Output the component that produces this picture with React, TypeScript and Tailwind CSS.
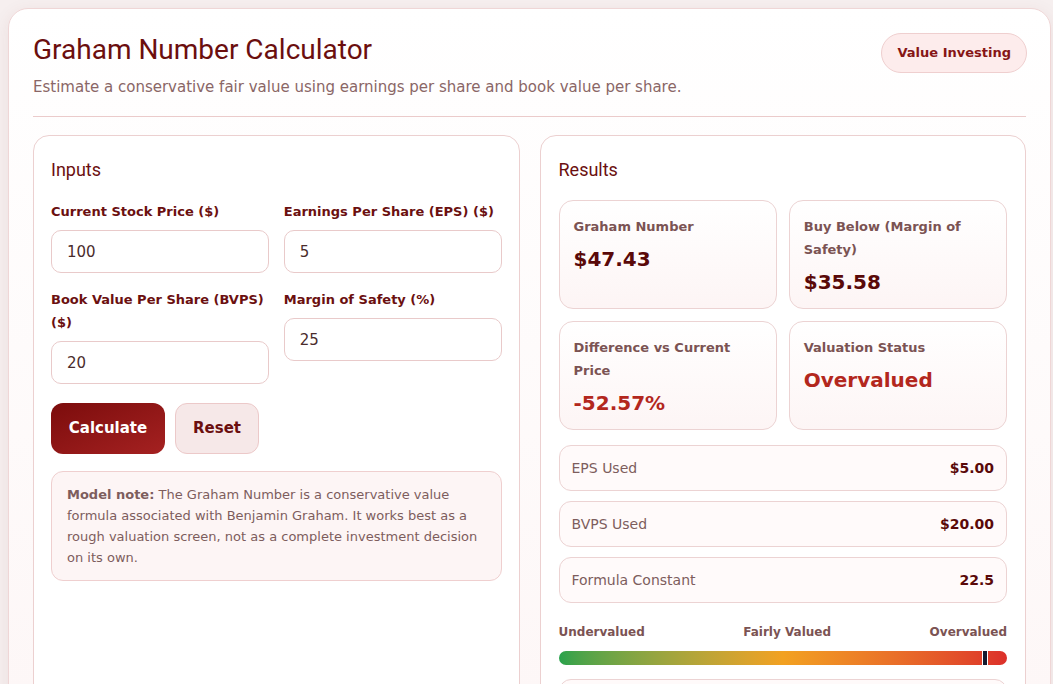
import { useState } from 'react';

const fieldDefs = [
  { key: 'price', label: 'Current Stock Price ($)', initial: '100' },
  { key: 'eps', label: 'Earnings Per Share (EPS) ($)', initial: '5' },
  { key: 'bvps', label: 'Book Value Per Share (BVPS) ($)', initial: '20' },
  { key: 'margin', label: 'Margin of Safety (%)', initial: '25' },
] as const;

type FieldKey = (typeof fieldDefs)[number]['key'];

function StatCard({ label, value, tone }: { label: string; value: string; tone: 'dark' | 'red' }) {
  return (
    <div className="rounded-[14px] border border-[#ecd3d3] bg-gradient-to-b from-white to-[#fdf5f5] px-[14px] pt-[14px] pb-[14px]">
      <div className="text-[13px] font-bold leading-[23px] text-[#7b5353]">{label}</div>
      <div
        className={
          tone === 'red'
            ? 'mt-[9px] text-[20px] font-bold leading-[24px] text-[#b3271d]'
            : 'mt-[9px] text-[20px] font-bold leading-[24px] text-[#5a0909]'
        }
      >
        {value}
      </div>
    </div>
  );
}

function DetailRow({ label, value }: { label: string; value: string }) {
  return (
    <div className="flex items-center justify-between rounded-[12px] border border-[#ecd3d3] bg-[#fffafa] px-3 h-[46px]">
      <span className="text-[14px] text-[#7d5d5d]">{label}</span>
      <span className="text-[14px] font-bold text-[#5a0909]">{value}</span>
    </div>
  );
}

export default function App() {
  const [values, setValues] = useState<Record<FieldKey, string>>({
    price: '100',
    eps: '5',
    bvps: '20',
    margin: '25',
  });

  const price = parseFloat(values.price) || 0;
  const eps = parseFloat(values.eps) || 0;
  const bvps = parseFloat(values.bvps) || 0;
  const margin = parseFloat(values.margin) || 0;

  const graham = Math.sqrt(22.5 * eps * bvps);
  const buyBelow = graham * (1 - margin / 100);
  const diff = price ? ((graham - price) / price) * 100 : 0;
  const status = price > graham * 1.1 ? 'Overvalued' : price < graham * 0.9 ? 'Undervalued' : 'Fairly Valued';

  // marker on the valuation bar, clamped so it stays inside the pill
  const markerPct = Math.min(95, Math.max(5, 50 - diff));

  return (
    <div className="min-h-screen bg-[#f6efef] pl-2 pr-[2px] pt-2 font-['DejaVu_Sans',sans-serif]">
      <div className="rounded-[20px] border border-[#efd6d6] bg-gradient-to-b from-white to-[#fdf6f6] p-6 shadow-[0_4px_18px_rgba(120,40,40,0.08)]">
        {/* HEADER */}
        <div className="flex items-start justify-between border-b border-[#ebcbcb] pb-[18px]">
          <div>
            <h1 className="font-['Roboto',sans-serif] text-[28px] leading-[34px] text-[#6b0e0e]">
              Graham Number Calculator
            </h1>
            <p className="mt-[10px] text-[15px] leading-[21px] text-[#8a6666]">
              Estimate a conservative fair value using earnings per share and book value per share.
            </p>
          </div>
          <span className="mr-[-1px] flex h-[40px] items-center rounded-full border border-[#efcfcf] bg-[#fdecec] px-[15px] text-[13px] font-bold text-[#861515]">
            Value Investing
          </span>
        </div>

        <div className="mt-[18px] grid grid-cols-2 gap-5">
          {/* INPUTS */}
          <section className="min-h-[560px] rounded-[16px] border border-[#ecd0d0] bg-white px-[17px] pt-[22px] pb-6">
            <h2 className="font-['Roboto',sans-serif] text-[18px] leading-[24px] text-[#6b1010]">Inputs</h2>

            <div className="mt-[18px] grid grid-cols-2 gap-x-[15px] gap-y-[15px]">
              {fieldDefs.map((f) => (
                <label key={f.key} className="block">
                  <span className="block text-[13px] font-bold leading-[23px] text-[#6b1010]">{f.label}</span>
                  <input
                    type="number"
                    value={values[f.key]}
                    onChange={(e) => setValues({ ...values, [f.key]: e.target.value })}
                    className="mt-[7px] h-[43px] w-full rounded-[10px] border border-[#e9caca] bg-white px-[15px] text-[15px] text-[#4a2c2c] outline-none [appearance:textfield] [&::-webkit-inner-spin-button]:appearance-none"
                  />
                </label>
              ))}
            </div>

            <div className="mt-[19px] flex gap-[10px]">
              <button className="h-[51px] w-[114px] rounded-[12px] bg-gradient-to-br from-[#7c0c0c] to-[#a52121] text-[15px] font-bold text-white">
                Calculate
              </button>
              <button
                onClick={() => setValues({ price: '', eps: '', bvps: '', margin: '' })}
                className="h-[51px] w-[84px] rounded-[12px] border border-[#ecc9c9] bg-[#f6e8e8] text-[15px] font-bold text-[#6b0f0f]"
              >
                Reset
              </button>
            </div>

            <div className="mt-[17px] rounded-[12px] border border-[#efcfcf] bg-[#fdf5f5] px-[15px] py-3 text-[13px] leading-[21px] text-[#7d5d5d]">
              <b>Model note:</b> The Graham Number is a conservative value formula associated with Benjamin
              Graham. It works best as a rough valuation screen, not as a complete investment decision on its own.
            </div>
          </section>

          {/* RESULTS */}
          <section className="rounded-[16px] border border-[#ecd0d0] bg-white px-[18px] pt-[22px] pb-6">
            <h2 className="font-['Roboto',sans-serif] text-[18px] leading-[24px] text-[#6b1010]">Results</h2>

            <div className="mt-[18px] grid grid-cols-2 gap-3">
              <StatCard label="Graham Number" value={`$${graham.toFixed(2)}`} tone="dark" />
              <StatCard label="Buy Below (Margin of Safety)" value={`$${buyBelow.toFixed(2)}`} tone="dark" />
              <StatCard label="Difference vs Current Price" value={`${diff.toFixed(2)}%`} tone="red" />
              <StatCard label="Valuation Status" value={status} tone="red" />
            </div>

            <div className="mt-[15px] flex flex-col gap-[10px]">
              <DetailRow label="EPS Used" value={`$${eps.toFixed(2)}`} />
              <DetailRow label="BVPS Used" value={`$${bvps.toFixed(2)}`} />
              <DetailRow label="Formula Constant" value="22.5" />
            </div>

            <div className="mt-[20px] flex justify-between text-[12px] font-bold text-[#7b5353]">
              <span>Undervalued</span>
              <span>Fairly Valued</span>
              <span>Overvalued</span>
            </div>
            <div className="relative mt-[10px] h-[14px] rounded-full bg-gradient-to-r from-[#27a24b] via-[#f2a121] to-[#dc2f2a]">
              <div
                className="absolute top-0 h-[14px] w-[4px] -translate-x-1/2 bg-[#141a2e] ring-1 ring-white"
                style={{ left: `${markerPct}%` }}
              />
            </div>

            <div className="mt-[14px] h-[46px] rounded-[12px] border border-[#ecd3d3] bg-[#fffafa]" />
          </section>
        </div>
      </div>
    </div>
  );
}
